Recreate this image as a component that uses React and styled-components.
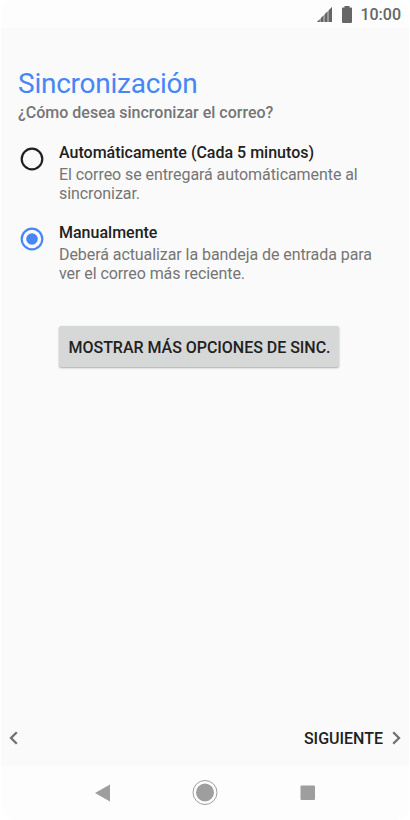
import { useState } from 'react';
import styled, { createGlobalStyle } from 'styled-components';

const GlobalStyle = createGlobalStyle`
    * {
        box-sizing: border-box;
    }

    body {
        margin: 0;
        background: #ffffff;
        font-family: Roboto, "Liberation Sans", sans-serif;
    }

    button {
        font-family: inherit;
        border: 0;
        padding: 0;
        background: none;
    }
`;

const Phone = styled.div`
    display: flex;
    flex-direction: column;
    width: 408px;
    height: 820px;
    margin-left: 1px;
    border-radius: 14px;
    overflow: hidden;
    background: #fdfdfd;
`;

const StatusBar = styled.header`
    display: flex;
    align-items: center;
    justify-content: flex-end;
    height: 28px;
    padding-right: 8px;
    color: #666666;
`;

const SignalIcon = styled.svg`
    width: 15px;
    height: 15px;
    margin-right: 10px;
`;

const BatteryIcon = styled.svg`
    width: 10px;
    height: 17px;
    margin-right: 8px;
`;

const Clock = styled.span`
    padding-top: 2px;
    font-size: 16px;
    font-weight: 500;
    line-height: 28px;
`;

const Content = styled.main`
    display: flex;
    flex-direction: column;
    height: 738px;
    padding-top: 39px;
    background: #fafafa;
`;

const Title = styled.h1`
    margin: 0 0 0 17px;
    color: #4687f4;
    font-size: 28px;
    font-weight: 400;
    letter-spacing: -0.25px;
    line-height: 34px;
`;

const Subtitle = styled.p`
    margin: 2px 0 20px 17px;
    color: #757575;
    font-size: 16px;
    font-weight: 500;
    line-height: 20px;
`;

const Option = styled.label`
    display: flex;
    height: 80px;
    padding-left: 19px;
`;

const HiddenRadio = styled.input`
    appearance: none;
    width: 0;
    height: 0;
    margin: 0;
`;

const RadioIcon = styled.svg`
    flex: none;
    width: 24px;
    height: 24px;
    margin: 4px 15px 0 0;
    color: ${({ $checked }) => ($checked ? '#4687f4' : '#212121')};
`;

const OptionTitle = styled.div`
    color: #212121;
    font-size: 16px;
    font-weight: 500;
    line-height: 20px;
`;

const OptionText = styled.div`
    margin-top: 2px;
    color: #757575;
    font-size: 16px;
    letter-spacing: -0.07px;
    line-height: 19px;
    white-space: pre-line;
`;

const MoreButton = styled.button`
    width: 280px;
    height: 41px;
    margin: 23px 0 0 58px;
    padding: 2px 0 0 1px;
    border-radius: 2px;
    background: #d6d7d7;
    box-shadow: 0 1px 2px rgba(0, 0, 0, 0.32);
    color: #212121;
    font-size: 16px;
    font-weight: 500;
    letter-spacing: -0.03px;
    line-height: 39px;
    white-space: nowrap;
`;

const Footer = styled.div`
    display: flex;
    align-items: center;
    justify-content: space-between;
    height: 56px;
    margin-top: auto;
    padding: 0 8px;
`;

const FooterButton = styled.button`
    display: flex;
    align-items: center;
    gap: 9px;
    color: #212121;
    font-size: 16px;
    font-weight: 500;
    line-height: 20px;
`;

const FooterLabel = styled.span`
    padding-top: 2px;
`;

const ChevronIcon = styled.svg`
    width: 9px;
    height: 14px;
    color: #707070;
`;

const NavBar = styled.nav`
    display: flex;
    justify-content: center;
    align-items: center;
    gap: 76px;
    height: 54px;
    color: #9e9e9e;
`;

const NavIcon = styled.svg`
    width: 26px;
    height: 26px;
`;

const options = [
    {
        id: 'auto',
        title: 'Automáticamente (Cada 5 minutos)',
        text: 'El correo se entregará automáticamente al\nsincronizar.'
    },
    {
        id: 'manual',
        title: 'Manualmente',
        text: 'Deberá actualizar la bandeja de entrada para\nver el correo más reciente.'
    }
];

const App = () => {
    const [selected, setSelected] = useState('manual');

    return (
        <>
            <GlobalStyle />
            <Phone>
                <StatusBar>
                    <SignalIcon viewBox="0 0 15 15" fill="currentColor">
                        <path d="M0 15L15 0V15Z" opacity="0.65" />
                        <path d="M0 15L2.5 12.5V15ZM4 15V11L6 9V15ZM8 15V7L10 5V15ZM12 15V3L15 0V15Z" />
                    </SignalIcon>
                    <BatteryIcon viewBox="0 0 10 17" fill="currentColor">
                        <path d="M2.5 0H7.5V1.5H9Q10 1.5 10 2.5V16Q10 17 9 17H1Q0 17 0 16V2.5Q0 1.5 1 1.5H2.5Z" />
                    </BatteryIcon>
                    <Clock>10:00</Clock>
                </StatusBar>

                <Content>
                    <Title>Sincronización</Title>
                    <Subtitle>¿Cómo desea sincronizar el correo?</Subtitle>

                    {options.map(({ id, title, text }) => (
                        <Option key={id}>
                            <HiddenRadio
                                type="radio"
                                name="sync"
                                checked={selected === id}
                                onChange={() => setSelected(id)}
                            />
                            <RadioIcon viewBox="0 0 24 24" $checked={selected === id}>
                                <circle cx="12" cy="12" r="10.3" fill="none" stroke="currentColor" strokeWidth="2.2" />
                                {selected === id && <circle cx="12" cy="12" r="5.8" fill="currentColor" />}
                            </RadioIcon>
                            <div>
                                <OptionTitle>{title}</OptionTitle>
                                <OptionText>{text}</OptionText>
                            </div>
                        </Option>
                    ))}

                    <MoreButton>MOSTRAR MÁS OPCIONES DE SINC.</MoreButton>

                    <Footer>
                        <FooterButton aria-label="Atrás">
                            <ChevronIcon viewBox="0 0 9 14" fill="none" stroke="currentColor" strokeWidth="2.3">
                                <path d="M7.8 1.2L2 7L7.8 12.8" />
                            </ChevronIcon>
                        </FooterButton>
                        <FooterButton>
                            <FooterLabel>SIGUIENTE</FooterLabel>
                            <ChevronIcon viewBox="0 0 9 14" fill="none" stroke="currentColor" strokeWidth="2.3">
                                <path d="M1.2 1.2L7 7L1.2 12.8" />
                            </ChevronIcon>
                        </FooterButton>
                    </Footer>
                </Content>

                <NavBar>
                    <NavIcon viewBox="0 0 26 26" fill="currentColor">
                        <path d="M5 13L20 4.5V21.5Z" />
                    </NavIcon>
                    <NavIcon viewBox="0 0 26 26" fill="currentColor">
                        <circle cx="13" cy="12.5" r="12" fill="none" stroke="currentColor" />
                        <circle cx="13" cy="12.5" r="9" />
                    </NavIcon>
                    <NavIcon viewBox="0 0 26 26" fill="currentColor">
                        <rect x="6.5" y="5.5" width="14.5" height="14.5" rx="1" />
                    </NavIcon>
                </NavBar>
            </Phone>
        </>
    );
};

export default App;
